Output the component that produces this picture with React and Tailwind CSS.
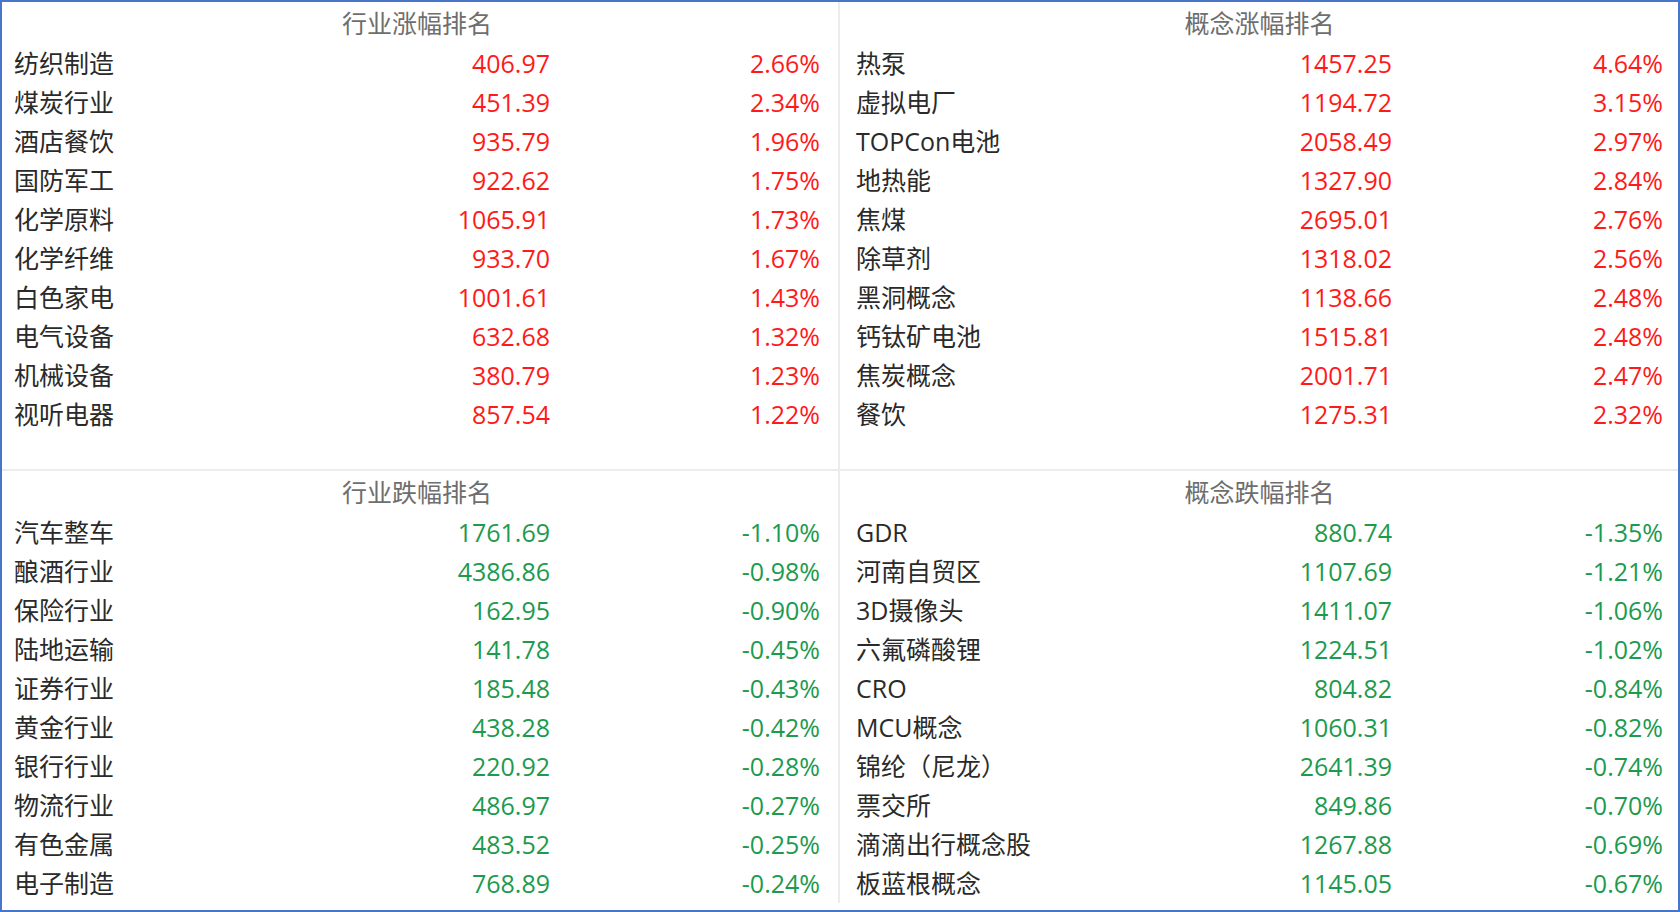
import React from 'react'

const upIndustry = [
  ['纺织制造', '406.97', '2.66%'],
  ['煤炭行业', '451.39', '2.34%'],
  ['酒店餐饮', '935.79', '1.96%'],
  ['国防军工', '922.62', '1.75%'],
  ['化学原料', '1065.91', '1.73%'],
  ['化学纤维', '933.70', '1.67%'],
  ['白色家电', '1001.61', '1.43%'],
  ['电气设备', '632.68', '1.32%'],
  ['机械设备', '380.79', '1.23%'],
  ['视听电器', '857.54', '1.22%'],
]

const upConcept = [
  ['热泵', '1457.25', '4.64%'],
  ['虚拟电厂', '1194.72', '3.15%'],
  ['TOPCon电池', '2058.49', '2.97%'],
  ['地热能', '1327.90', '2.84%'],
  ['焦煤', '2695.01', '2.76%'],
  ['除草剂', '1318.02', '2.56%'],
  ['黑洞概念', '1138.66', '2.48%'],
  ['钙钛矿电池', '1515.81', '2.48%'],
  ['焦炭概念', '2001.71', '2.47%'],
  ['餐饮', '1275.31', '2.32%'],
]

const downIndustry = [
  ['汽车整车', '1761.69', '-1.10%'],
  ['酿酒行业', '4386.86', '-0.98%'],
  ['保险行业', '162.95', '-0.90%'],
  ['陆地运输', '141.78', '-0.45%'],
  ['证券行业', '185.48', '-0.43%'],
  ['黄金行业', '438.28', '-0.42%'],
  ['银行行业', '220.92', '-0.28%'],
  ['物流行业', '486.97', '-0.27%'],
  ['有色金属', '483.52', '-0.25%'],
  ['电子制造', '768.89', '-0.24%'],
]

const downConcept = [
  ['GDR', '880.74', '-1.35%'],
  ['河南自贸区', '1107.69', '-1.21%'],
  ['3D摄像头', '1411.07', '-1.06%'],
  ['六氟磷酸锂', '1224.51', '-1.02%'],
  ['CRO', '804.82', '-0.84%'],
  ['MCU概念', '1060.31', '-0.82%'],
  ['锦纶（尼龙）', '2641.39', '-0.74%'],
  ['票交所', '849.86', '-0.70%'],
  ['滴滴出行概念股', '1267.88', '-0.69%'],
  ['板蓝根概念', '1145.05', '-0.67%'],
]

function Panel({ title, rows, up, className }) {
  const color = up ? 'text-[#ff1a1a]' : 'text-[#1c9a4e]'
  return (
    <div className={className}>
      <div className="h-[42px] flex items-center justify-center text-[#6e6e6e]">{title}</div>
      {rows.map(([name, value, pct]) => (
        <div key={name} className="h-[39px] flex items-center">
          <div className="w-[401px] text-[#2a2a2a] whitespace-nowrap">{name}</div>
          <div className={`w-[135px] text-right ${color}`}>{value}</div>
          <div className={`flex-1 text-right ${color}`}>{pct}</div>
        </div>
      ))}
    </div>
  )
}

export default function App() {
  return (
    <div
      className="w-[1680px] h-[912px] bg-white border-2 border-[#4a74c9] overflow-hidden text-[25px] leading-none"
      style={{ fontFamily: '"Open Sans", "Noto Sans CJK SC", sans-serif' }}
    >
      <div className="flex h-[469px] border-b-2 border-[#ececec]">
        <Panel
          title="行业涨幅排名"
          rows={upIndustry}
          up
          className="w-[838px] border-r-2 border-[#ececec] pl-[12px] pr-[18px]"
        />
        <Panel title="概念涨幅排名" rows={upConcept} up className="flex-1 pl-[16px] pr-[15px]" />
      </div>
      <div className="flex flex-1">
        <Panel
          title="行业跌幅排名"
          rows={downIndustry}
          className="w-[838px] border-r-2 border-[#ececec] pl-[12px] pr-[18px]"
        />
        <Panel title="概念跌幅排名" rows={downConcept} className="flex-1 pl-[16px] pr-[15px]" />
      </div>
    </div>
  )
}
